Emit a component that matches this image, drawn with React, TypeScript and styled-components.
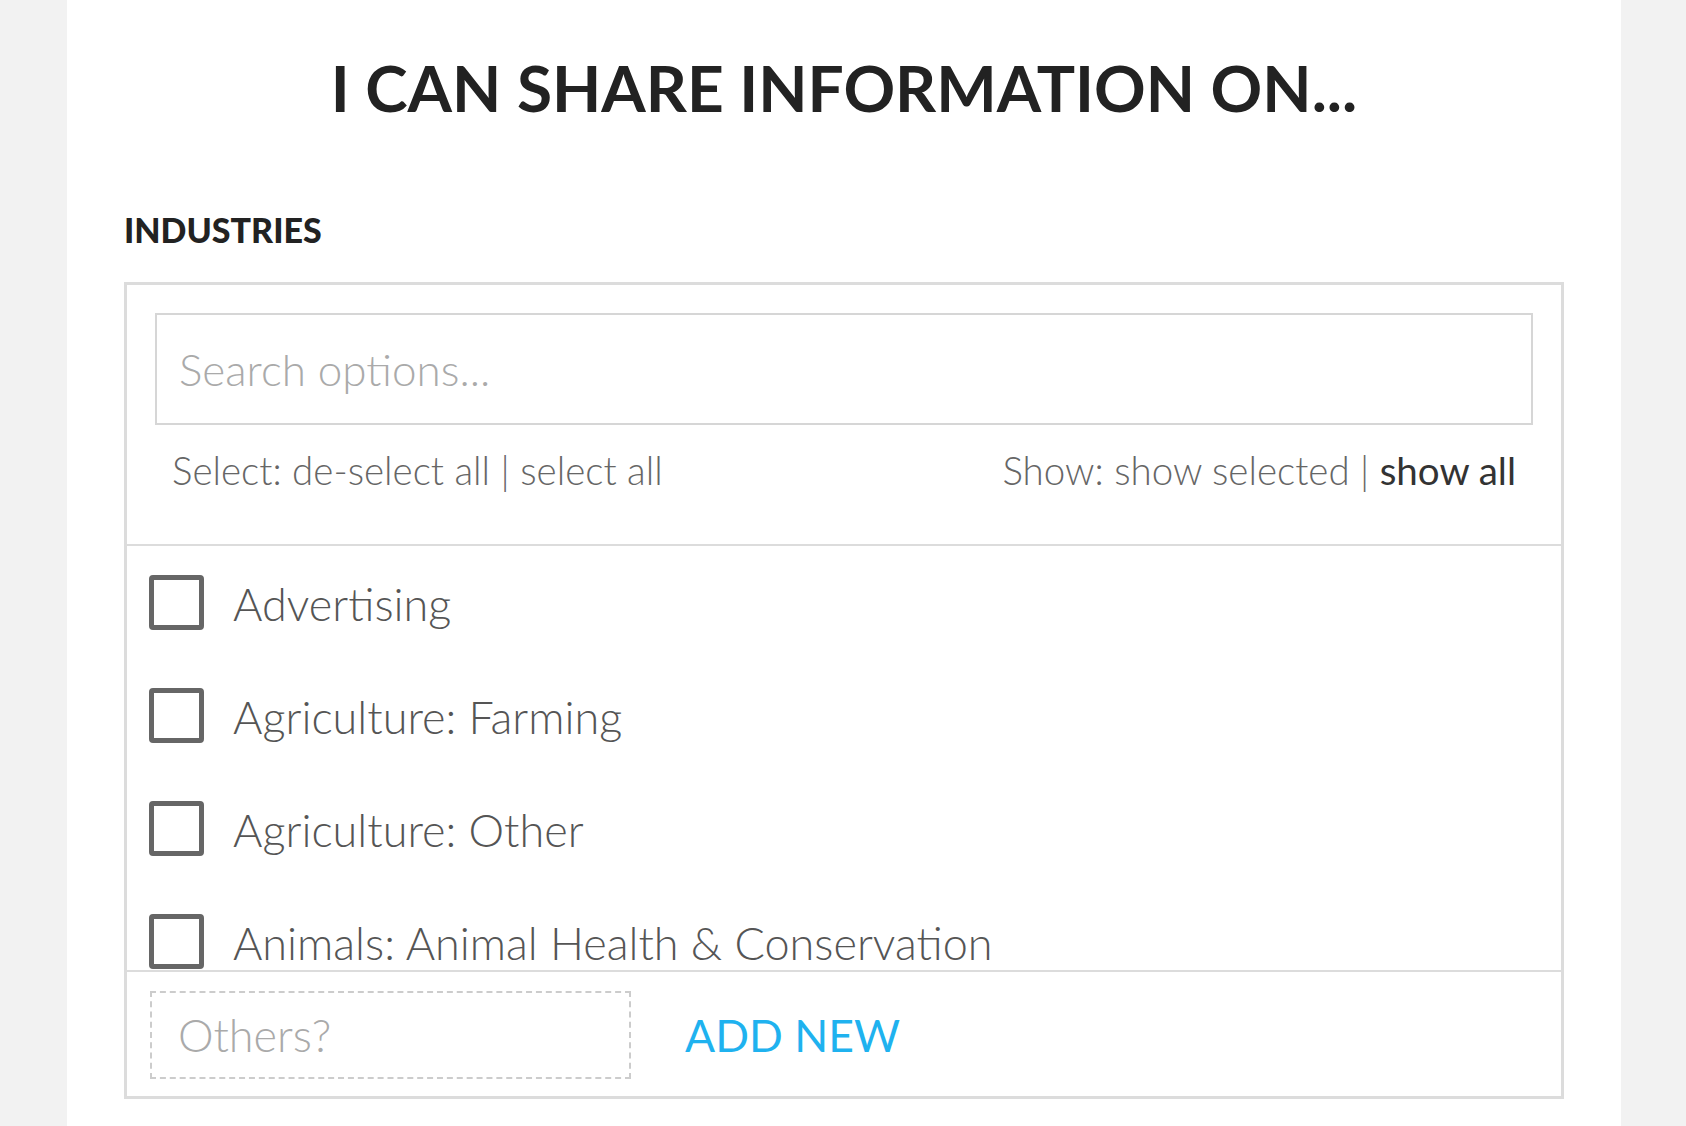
import React from "react";
import styled, { createGlobalStyle } from "styled-components";

const GlobalStyle = createGlobalStyle`
  html, body {
    margin: 0;
    padding: 0;
    background: #f2f2f2;
    font-family: Lato, "Open Sans", sans-serif;
  }
  * {
    box-sizing: border-box;
  }
`;

const Panel = styled.div`
  width: 1554px;
  min-height: 1126px;
  margin-left: 67px;
  background: #fff;
  padding: 56px 57px 0 57px;
`;

const Title = styled.h1`
  margin: 0;
  font-size: 64px;
  line-height: 1;
  font-weight: 700;
  color: #222;
  text-align: center;
`;

const SectionLabel = styled.h2`
  margin: 93px 0 0 0;
  font-size: 34px;
  line-height: 1;
  font-weight: 900;
  color: #222;
`;

const Box = styled.div`
  margin-top: 35px;
  border: 3px solid #dcdcdc;
`;

const BoxHeader = styled.div`
  padding: 28px 28px 54px 28px;
  border-bottom: 2px solid #dcdcdc;
`;

const SearchInput = styled.input`
  display: block;
  width: 100%;
  height: 112px;
  border: 2px solid #d6d6d6;
  padding: 0 22px;
  font-family: Lato, sans-serif;
  font-size: 44px;
  font-weight: 300;
  color: #444;
  outline: none;
  &::placeholder {
    color: #aaa;
  }
`;

const LinkRow = styled.div`
  display: flex;
  justify-content: space-between;
  margin-top: 26px;
  padding: 0 17px;
  font-size: 38.5px;
  line-height: 1;
  font-weight: 300;
  color: #666;
`;

const LinkGroup = styled.div``;

const Link = styled.span<{ $active?: boolean }>`
  cursor: pointer;
  color: ${(p) => (p.$active ? "#333" : "#666")};
  font-weight: ${(p) => (p.$active ? 400 : 300)};
`;

const List = styled.div`
  height: 424px;
  overflow: hidden;
  padding: 29px 0 0 22px;
`;

const Row = styled.label`
  display: flex;
  align-items: center;
  height: 55px;
  margin-bottom: 58px;
  cursor: pointer;
`;

const CheckBox = styled.span`
  flex: none;
  width: 55px;
  height: 55px;
  border: 5px solid #666;
  border-radius: 4px;
`;

const RowText = styled.span`
  margin-left: 29px;
  padding-top: 4px;
  font-size: 45px;
  line-height: 1;
  font-weight: 300;
  color: #555;
  white-space: nowrap;
`;

const Footer = styled.div`
  display: flex;
  align-items: center;
  border-top: 2px solid #dcdcdc;
  padding: 19px 0 17px 23px;
`;

const OtherInput = styled.input`
  width: 481px;
  height: 88px;
  border: 2px dashed #ccc;
  padding: 0 26px;
  font-family: Lato, sans-serif;
  font-size: 45px;
  font-weight: 300;
  color: #444;
  outline: none;
  &::placeholder {
    color: #aaa;
  }
`;

const AddButton = styled.button`
  margin-left: 54px;
  border: none;
  background: none;
  padding: 0;
  font-family: Lato, sans-serif;
  font-size: 44.5px;
  font-weight: 400;
  color: #1fb2ef;
  cursor: pointer;
`;

const industries = [
  "Advertising",
  "Agriculture: Farming",
  "Agriculture: Other",
  "Animals: Animal Health & Conservation",
  "Architecture",
];

export default function App() {
  return (
    <>
      <GlobalStyle />
      <Panel>
        <Title>I CAN SHARE INFORMATION ON...</Title>
        <SectionLabel>INDUSTRIES</SectionLabel>
        <Box>
          <BoxHeader>
            <SearchInput placeholder="Search options..." />
            <LinkRow>
              <LinkGroup>
                Select: <Link>de-select all</Link> | <Link>select all</Link>
              </LinkGroup>
              <LinkGroup>
                Show: <Link>show selected</Link> | <Link $active>show all</Link>
              </LinkGroup>
            </LinkRow>
          </BoxHeader>
          <List>
            {industries.map((name) => (
              <Row key={name}>
                <CheckBox />
                <RowText>{name}</RowText>
              </Row>
            ))}
          </List>
          <Footer>
            <OtherInput placeholder="Others?" />
            <AddButton>ADD NEW</AddButton>
          </Footer>
        </Box>
      </Panel>
    </>
  );
}
